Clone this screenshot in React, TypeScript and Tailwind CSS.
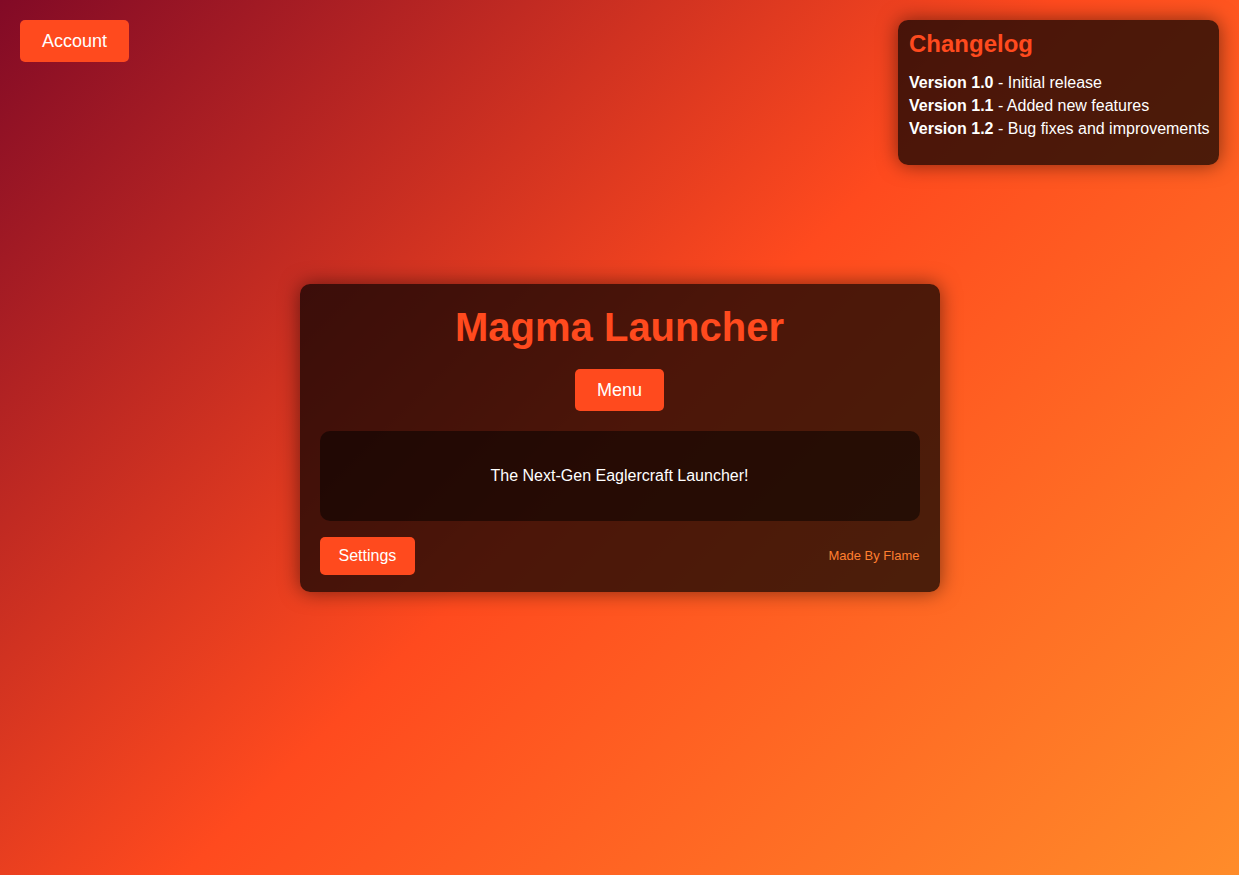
export default function App() {
    return (
        <div className="grid min-h-screen bg-[linear-gradient(135deg,#820a26,#ff4a1e,#ff8c2a)] font-['Liberation_Sans',Arial,sans-serif] text-white">
            <div className="col-start-1 row-start-1 self-start justify-self-start m-5">
                <button className="bg-[#ff4a1e] text-white text-[18px] leading-[22px] px-[22px] py-[10px] rounded-[5px]">Account</button>
            </div>

            <div className="col-start-1 row-start-1 self-start justify-self-end m-5 w-[321px] pt-[10px] pr-[9px] pl-[11px] pb-[25px] rounded-[10px] bg-black/70 shadow-[0_0_20px_rgba(0,0,0,0.5)]">
                <h2 className="text-[24px] leading-[28px] font-bold text-[#ff4a1e] mb-[13px]">Changelog</h2>
                <ul className="text-[16px] leading-[23px] whitespace-nowrap">
                    <li><b>Version 1.0</b> - Initial release</li>
                    <li><b>Version 1.1</b> - Added new features</li>
                    <li><b>Version 1.2</b> - Bug fixes and improvements</li>
                </ul>
            </div>

            <div className="col-start-1 row-start-1 self-center justify-self-center w-[640px] px-5 pt-5 pb-[17px] rounded-[10px] bg-black/70 shadow-[0_0_20px_rgba(0,0,0,0.5)] flex flex-col items-center">
                <h1 className="text-[40px] leading-[46px] font-bold text-[#ff4a1e]">Magma Launcher</h1>
                <button className="mt-[19px] bg-[#ff4a1e] text-white text-[18px] leading-[22px] px-[22px] py-[10px] rounded-[5px]">Menu</button>
                <div className="mt-5 w-full h-[90px] rounded-[10px] bg-black/50 flex items-center justify-center text-[16px]">
                    The Next-Gen Eaglercraft Launcher!
                </div>
                <div className="mt-4 w-full flex items-center justify-between">
                    <button className="bg-[#ff4a1e] text-white text-[16px] leading-[18px] px-[19px] py-[10px] rounded-[5px]">Settings</button>
                    <span className="text-[13px] text-[#ff7f30]">Made By Flame</span>
                </div>
            </div>
        </div>
    )
}
